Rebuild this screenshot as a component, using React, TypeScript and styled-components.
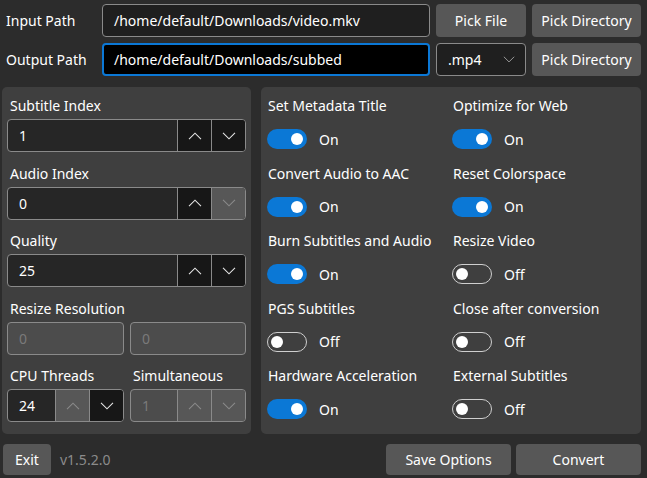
import React from "react";
import styled, { createGlobalStyle, css } from "styled-components";

const Global = createGlobalStyle`
  html, body { margin: 0; padding: 0; background: #2c2c2c; }
  body {
    font-family: "Noto Sans", "Open Sans", sans-serif;
    font-size: 14px;
    color: #ffffff;
    width: 647px;
    height: 478px;
    overflow: hidden;
  }
  * { box-sizing: border-box; }
`;

const Page = styled.div`
  padding: 4px 6px 0 2px;
  display: flex;
  flex-direction: column;
`;

const PathRow = styled.div`
  display: grid;
  grid-template-columns: 94px 328px 90px 109px;
  column-gap: 6px;
  height: 33px;
  align-items: center;
  & + & { margin-top: 6px; }
`;

const RowLabel = styled.div`
  padding-left: 4px;
  white-space: nowrap;
`;

const TextBox = styled.div<{ $focused?: boolean }>`
  height: 33px;
  border-radius: 4px;
  display: flex;
  align-items: center;
  padding-left: 11px;
  white-space: nowrap;
  overflow: hidden;
  ${(p) =>
    p.$focused
      ? css`
          background: #000000;
          border: 2px solid #0b78d6;
          padding-left: 10px;
        `
      : css`
          background: #1f1f1f;
          border: 1px solid #8a8a8a;
        `}
`;

const Button = styled.button<{ $w?: number }>`
  height: 33px;
  border: none;
  border-radius: 4px;
  background: #575757;
  color: #ffffff;
  font: inherit;
  padding: 0;
  white-space: nowrap;
  ${(p) => p.$w && css`width: ${p.$w}px;`}
`;

const Combo = styled.div`
  height: 33px;
  border-radius: 4px;
  border: 1px solid #8a8a8a;
  background: #1f1f1f;
  display: flex;
  align-items: center;
  justify-content: space-between;
  padding: 0 10px 0 11px;
`;

const Panels = styled.div`
  display: grid;
  grid-template-columns: 249px 380px;
  column-gap: 10px;
  margin-top: 11px;
  height: 346px;
`;

const Panel = styled.div`
  background: #3f3f3f;
  border-radius: 5px;
`;

const LeftPanel = styled(Panel)`
  padding: 9px 5px 0 5px;
  display: flex;
  flex-direction: column;
  gap: 11.5px;
`;

const Field = styled.div`
  display: flex;
  flex-direction: column;
`;

const FieldLabel = styled.div`
  height: 20px;
  line-height: 20px;
  padding-left: 3px;
  margin-bottom: 3px;
  white-space: nowrap;
`;

const Pair = styled.div`
  display: grid;
  grid-template-columns: 117px 116px;
  column-gap: 6px;
`;

const Spin = styled.div<{ $disabled?: boolean }>`
  height: 33px;
  border: 1px solid #8a8a8a;
  border-radius: 4px;
  overflow: hidden;
  display: flex;
  background: ${(p) => (p.$disabled ? "#4c4c4c" : "#262626")};
`;

const SpinText = styled.div<{ $disabled?: boolean }>`
  flex: 1;
  display: flex;
  align-items: center;
  padding-left: 11px;
  color: ${(p) => (p.$disabled ? "#7a7a7a" : "#ffffff")};
`;

const SpinBtn = styled.div<{ $disabled?: boolean }>`
  width: 34px;
  flex: none;
  border-left: 1px solid #8a8a8a;
  display: flex;
  align-items: center;
  justify-content: center;
  background: ${(p) => (p.$disabled ? "#575757" : "#171717")};
  color: ${(p) => (p.$disabled ? "#8a8a8a" : "#e6e6e6")};
`;

const RightPanel = styled(Panel)`
  padding: 9px 0 0 6px;
  display: grid;
  grid-template-columns: 185px 185px;
  grid-auto-rows: 67.5px;
  align-content: start;
`;

const Option = styled.div`
  display: flex;
  flex-direction: column;
`;

const OptionLabel = styled.div`
  height: 20px;
  line-height: 20px;
  padding-left: 1px;
  margin-bottom: 13px;
  white-space: nowrap;
`;

const ToggleRow = styled.div`
  display: flex;
  align-items: center;
  height: 20px;
  gap: 12px;
`;

const Track = styled.div<{ $on: boolean }>`
  width: 40px;
  height: 20px;
  border-radius: 10px;
  position: relative;
  ${(p) =>
    p.$on
      ? css`background: #0b78d6;`
      : css`border: 1px solid #cfcfcf;`}
`;

const Knob = styled.div<{ $on: boolean }>`
  position: absolute;
  top: 50%;
  width: 12px;
  height: 12px;
  margin-top: -6px;
  border-radius: 50%;
  background: #ffffff;
  ${(p) => (p.$on ? css`right: 4px;` : css`left: 3px;`)}
`;

const Footer = styled.div`
  display: flex;
  align-items: center;
  margin-top: 11px;
  height: 31px;
`;

const FooterButton = styled(Button)<{ $w?: number }>`
  height: 31px;
`;

const Version = styled.span`
  color: #8b8b8b;
  margin-left: 9px;
`;

const Spacer = styled.div`
  flex: 1;
`;

const Chevron = ({ up, size = 14 }: { up?: boolean; size?: number }) => (
  <svg width={size} height={size / 2 + 1} viewBox="0 0 14 8" fill="none">
    <path
      d={up ? "M1 7.2 L7 1.2 L13 7.2" : "M1 0.8 L7 6.8 L13 0.8"}
      stroke="currentColor"
      strokeWidth="1.1"
    />
  </svg>
);

type SpinProps = {
  value: string;
  disabled?: boolean;
  upDisabled?: boolean;
  downDisabled?: boolean;
};

const NumberBox = ({ value, disabled, upDisabled, downDisabled }: SpinProps) => (
  <Spin $disabled={disabled}>
    <SpinText $disabled={disabled}>{value}</SpinText>
    <SpinBtn $disabled={disabled || upDisabled}>
      <Chevron up />
    </SpinBtn>
    <SpinBtn $disabled={disabled || downDisabled}>
      <Chevron />
    </SpinBtn>
  </Spin>
);

const Toggle = ({ label, on }: { label: string; on: boolean }) => (
  <Option>
    <OptionLabel>{label}</OptionLabel>
    <ToggleRow>
      <Track $on={on}>
        <Knob $on={on} />
      </Track>
      <span>{on ? "On" : "Off"}</span>
    </ToggleRow>
  </Option>
);

const options: [string, boolean][] = [
  ["Set Metadata Title", true],
  ["Optimize for Web", true],
  ["Convert Audio to AAC", true],
  ["Reset Colorspace", true],
  ["Burn Subtitles and Audio", true],
  ["Resize Video", false],
  ["PGS Subtitles", false],
  ["Close after conversion", false],
  ["Hardware Acceleration", true],
  ["External Subtitles", false],
];

export default function App() {
  return (
    <>
      <Global />
      <Page>
        <PathRow>
          <RowLabel>Input Path</RowLabel>
          <TextBox>/home/default/Downloads/video.mkv</TextBox>
          <Button>Pick File</Button>
          <Button>Pick Directory</Button>
        </PathRow>
        <PathRow>
          <RowLabel>Output Path</RowLabel>
          <TextBox $focused>/home/default/Downloads/subbed</TextBox>
          <Combo>
            <span>.mp4</span>
            <span style={{ color: "#a0a0a0", display: "flex" }}>
              <Chevron size={12} />
            </span>
          </Combo>
          <Button>Pick Directory</Button>
        </PathRow>

        <Panels>
          <LeftPanel>
            <Field>
              <FieldLabel>Subtitle Index</FieldLabel>
              <NumberBox value="1" />
            </Field>
            <Field>
              <FieldLabel>Audio Index</FieldLabel>
              <NumberBox value="0" downDisabled />
            </Field>
            <Field>
              <FieldLabel>Quality</FieldLabel>
              <NumberBox value="25" />
            </Field>
            <Field>
              <FieldLabel>Resize Resolution</FieldLabel>
              <Pair>
                <Spin $disabled>
                  <SpinText $disabled>0</SpinText>
                </Spin>
                <Spin $disabled>
                  <SpinText $disabled>0</SpinText>
                </Spin>
              </Pair>
            </Field>
            <Pair>
              <Field>
                <FieldLabel>CPU Threads</FieldLabel>
                <NumberBox value="24" upDisabled />
              </Field>
              <Field>
                <FieldLabel>Simultaneous</FieldLabel>
                <NumberBox value="1" disabled />
              </Field>
            </Pair>
          </LeftPanel>
          <RightPanel>
            {options.map(([l, on]) => (
              <Toggle key={l} label={l} on={on} />
            ))}
          </RightPanel>
        </Panels>

        <Footer>
          <FooterButton $w={48} style={{ marginLeft: 1 }}>Exit</FooterButton>
          <Version>v1.5.2.0</Version>
          <Spacer />
          <FooterButton $w={125}>Save Options</FooterButton>
          <FooterButton $w={125} style={{ marginLeft: 5 }}>Convert</FooterButton>
        </Footer>
      </Page>
    </>
  );
}
